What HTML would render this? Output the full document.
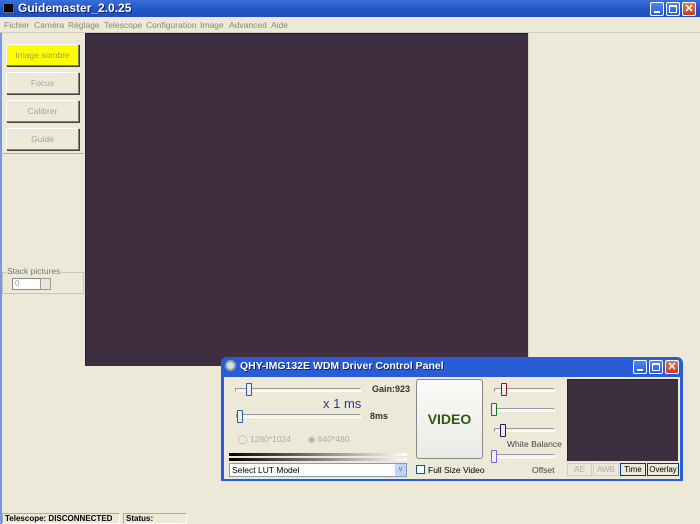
<!DOCTYPE html>
<html><head><meta charset="utf-8"><style>
*{margin:0;padding:0;box-sizing:border-box}
body{width:700px;height:524px;overflow:hidden;background:#ece9d8;font-family:"Liberation Sans",sans-serif;font-size:9px;position:relative;color:#000;white-space:nowrap}
.abs{position:absolute}
.title{left:0;top:0;width:700px;height:17px;background:linear-gradient(#3a6fd8,#2457c9 50%,#1f4fc0);}
.title .t{left:18px;top:1px;color:#fff;font-weight:bold;font-size:12px;text-shadow:1px 1px #0a246a}
.wb{top:2px;width:14px;height:14px;border:1px solid #fff;border-radius:2px;background:linear-gradient(#4f86ef,#2a5fd4)}
.menu{left:0;top:17px;width:700px;height:16px;background:#ece9d8;border-bottom:1px solid #d0cdbf;color:#8a887c;font-size:8.5px}
.menu span{position:absolute;top:3px}
.btn{left:6px;width:73px;height:22px;border:1px solid #fff;border-right-color:#808070;border-bottom-color:#808070;box-shadow:1px 1px 0 #404040;background:#ece9d8;color:#a7a598;text-align:center;line-height:20px;font-size:8.5px}
.img{background:#3e2e40;border-top:1px solid #222;border-left:1px solid #222}
.sb{top:513px;height:11px;border:1px solid #aaa;border-right-color:#fff;border-bottom-color:#fff;font-weight:bold;font-size:8px;line-height:9px;padding-left:2px;overflow:hidden}
.track{height:4px;border:1px solid #999;border-right-color:#fff;border-bottom-color:#fff;background:#f4f3ee}
.thumb{width:6px;height:13px;border:1px solid;border-radius:1px;background:#eee}
.small{border:1px solid #999;background:#ece9d8;text-align:center;line-height:12px;font-size:8px;height:13px;top:463px}
</style></head><body>
<div class="abs title">
 <div class="abs" style="left:3px;top:3px;width:11px;height:10px;background:#000;border:1px solid #666"></div>
 <div class="abs t">Guidemaster_2.0.25</div>
 <div class="abs wb" style="left:650px"><div class="abs" style="left:3px;top:8px;width:6px;height:2px;background:#fff"></div></div>
 <div class="abs wb" style="left:666px"><div class="abs" style="left:2px;top:2px;width:8px;height:8px;border:1px solid #fff;border-top-width:2px"></div></div>
 <div class="abs wb" style="left:682px;background:linear-gradient(#e0785a,#c4411f);color:#fff;font-weight:bold;font-size:11px;text-align:center;line-height:12px">✕</div>
</div>
<div class="abs menu">
 <span style="left:4px">Fichier</span><span style="left:34px">Caméra</span><span style="left:68px">Réglage</span><span style="left:104px">Telescope</span><span style="left:146px">Configuration</span><span style="left:200px">Image</span><span style="left:229px">Advanced</span><span style="left:271px">Aide</span>
</div>
<div class="abs" style="left:0;top:33px;width:2px;height:491px;background:#7a96df"></div>
<div class="abs" style="left:0;top:153px;width:84px;height:1px;background:#b5b2a4"></div>
<div class="abs btn" style="top:44px;background:#ffff00;color:#a0a040">Image sombre</div>
<div class="abs btn" style="top:72px">Focus</div>
<div class="abs btn" style="top:100px">Calibrer</div>
<div class="abs btn" style="top:128px">Guide</div>
<div class="abs" style="left:2px;top:272px;width:82px;height:22px;border:1px solid #c8c5b6"></div>
<div class="abs" style="left:6px;top:266px;background:#ece9d8;color:#777;padding:0 1px;font-size:8.5px">Stack pictures</div>
<div class="abs" style="left:12px;top:278px;width:28px;height:12px;background:#fff;border:1px solid #888;border-right:none;color:#999;font-size:8px;padding-left:2px;line-height:10px">0</div>
<div class="abs" style="left:40px;top:278px;width:11px;height:12px;border:1px solid #999;background:#e8e6da"></div>
<div class="abs img" style="left:85px;top:33px;width:443px;height:333px"></div>
<div class="abs" style="left:528px;top:33px;width:1px;height:333px;background:#d6d3c5"></div>
<div class="abs sb" style="left:2px;width:118px">Telescope: DISCONNECTED</div>
<div class="abs sb" style="left:123px;width:64px">Status:</div>

<!-- dialog -->
<div class="abs" style="left:221px;top:357px;width:462px;height:124px;background:#2a5cd6;border-radius:6px 6px 0 0"></div>
<div class="abs" style="left:225px;top:360px;width:11px;height:11px;border-radius:50%;background:#ddd;border:2px solid #8aa"></div>
<div class="abs" style="left:240px;top:360px;color:#fff;font-weight:bold;font-size:10.5px;text-shadow:1px 1px #0a246a">QHY-IMG132E WDM Driver Control Panel</div>
<div class="abs wb" style="left:633px;top:360px"><div class="abs" style="left:3px;top:8px;width:6px;height:2px;background:#fff"></div></div>
<div class="abs wb" style="left:649px;top:360px"><div class="abs" style="left:2px;top:2px;width:8px;height:8px;border:1px solid #fff;border-top-width:2px"></div></div>
<div class="abs wb" style="left:665px;top:360px;background:linear-gradient(#e0785a,#c4411f);color:#fff;font-weight:bold;font-size:11px;text-align:center;line-height:12px">✕</div>
<div class="abs" style="left:224px;top:377px;width:456px;height:102px;background:#ece9d8"></div>

<div class="abs track" style="left:235px;top:388px;width:126px"></div>
<div class="abs thumb" style="left:246px;top:383px;border-color:#2a5aa0"></div>
<div class="abs" style="left:372px;top:384px;font-weight:bold;font-size:9px;color:#333">Gain:923</div>
<div class="abs" style="left:323px;top:396px;font-size:13px;color:#2b3a9a">x 1 ms</div>
<div class="abs track" style="left:236px;top:414px;width:125px"></div>
<div class="abs thumb" style="left:237px;top:410px;border-color:#2a5aa0"></div>
<div class="abs" style="left:370px;top:411px;font-weight:bold;font-size:9px;color:#333">8ms</div>
<div class="abs" style="left:238px;top:434px;color:#aaa;font-size:8.5px">◯ 1280*1024</div>
<div class="abs" style="left:308px;top:434px;color:#aaa;font-size:8.5px">◉ 640*480</div>
<div class="abs" style="left:229px;top:453px;width:178px;height:3px;background:linear-gradient(90deg,#000,#fff)"></div>
<div class="abs" style="left:229px;top:458px;width:178px;height:3px;background:linear-gradient(90deg,#000,#fff)"></div>
<div class="abs" style="left:229px;top:463px;width:178px;height:14px;background:#fff;border:1px solid #7f9db9;font-size:8.5px;line-height:12px;padding-left:2px">Select LUT Model</div>
<div class="abs" style="left:395px;top:464px;width:11px;height:12px;background:#c3d3f7;color:#4d6185;font-size:7px;text-align:center;line-height:12px">v</div>

<div class="abs" style="left:416px;top:379px;width:67px;height:80px;border:1px solid #888;border-radius:3px;background:linear-gradient(#fafaf8,#ebeae4);text-align:center;line-height:78px;font-weight:bold;font-size:14px;color:#2d5a10">VIDEO</div>
<div class="abs" style="left:416px;top:465px;width:9px;height:9px;border:1px solid #1c5180;background:#fff"></div>
<div class="abs" style="left:428px;top:465px;font-size:8.5px">Full Size Video</div>

<div class="abs track" style="left:494px;top:388px;width:61px"></div>
<div class="abs thumb" style="left:501px;top:383px;border-color:#8a1a1a"></div>
<div class="abs track" style="left:492px;top:408px;width:63px"></div>
<div class="abs thumb" style="left:491px;top:403px;border-color:#1a7a1a"></div>
<div class="abs track" style="left:494px;top:428px;width:61px"></div>
<div class="abs thumb" style="left:500px;top:424px;border-color:#1a1a6a"></div>
<div class="abs" style="left:507px;top:439px;font-size:8.5px;color:#444">White Balance</div>
<div class="abs track" style="left:492px;top:454px;width:63px"></div>
<div class="abs thumb" style="left:491px;top:450px;border-color:#6a6ad0"></div>
<div class="abs" style="left:532px;top:465px;font-size:8.5px;color:#444">Offset</div>

<div class="abs img" style="left:567px;top:379px;width:111px;height:82px;background:#3d2f3e"></div>
<div class="abs small" style="left:567px;width:25px;color:#aaa;border-color:#ccc">AE</div>
<div class="abs small" style="left:593px;width:26px;color:#aaa;border-color:#ccc">AWB</div>
<div class="abs small" style="left:620px;width:26px;border-color:#003c74">Time</div>
<div class="abs small" style="left:647px;width:32px;border-color:#003c74">Overlay</div>
</body></html>
